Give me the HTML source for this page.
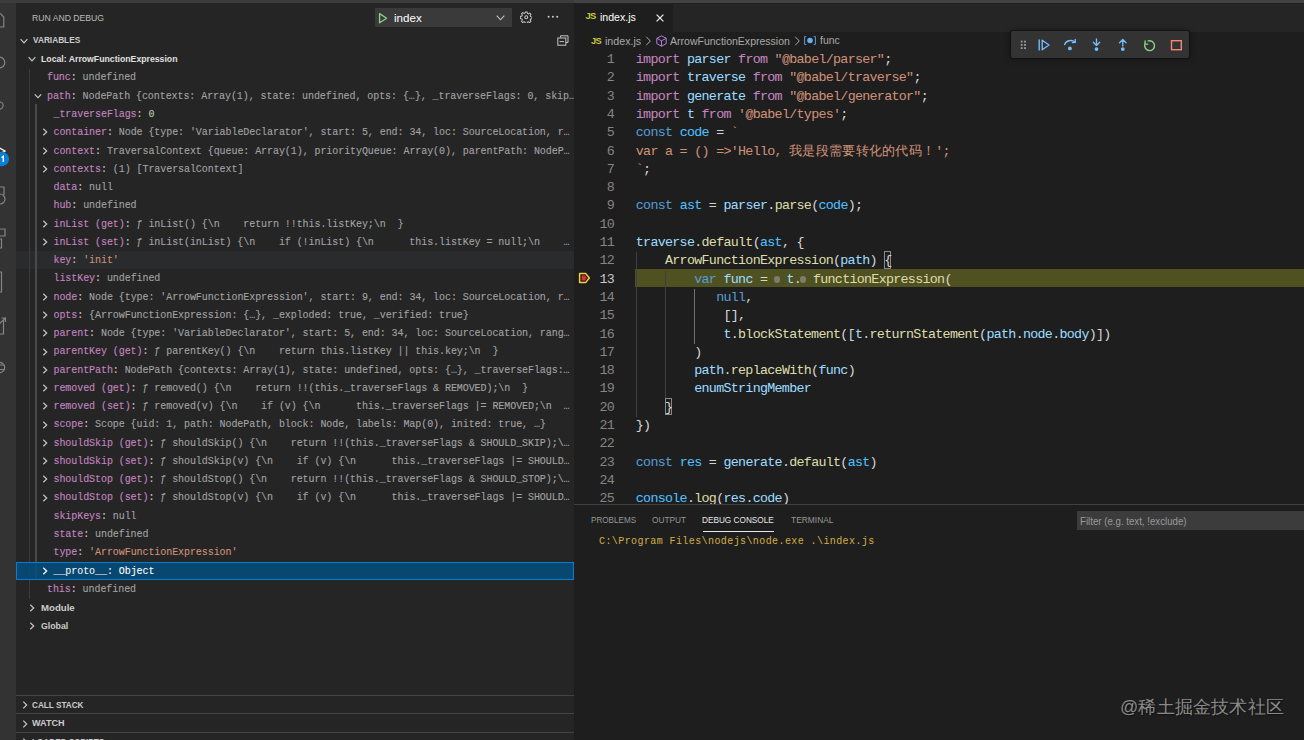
<!DOCTYPE html>
<html><head><meta charset="utf-8">
<style>
*{margin:0;padding:0;box-sizing:border-box}
html,body{width:1304px;height:740px;overflow:hidden;background:#1e1e1e}
body{position:relative;font-family:"Liberation Sans",sans-serif;color:#cccccc}
.abs{position:absolute}
#topstrip{position:absolute;left:0;top:0;width:1304px;height:3px;background:#424242}
#act{position:absolute;left:0;top:3px;width:16px;height:737px;background:#333333;overflow:hidden}
#side{position:absolute;left:16px;top:3px;width:558px;height:737px;background:#252526;overflow:hidden}
#side .title{position:absolute;left:16.8px;top:9.2px;font-size:8.5px;color:#bbbbbb;white-space:pre;line-height:12px}
.dd{position:absolute;left:359px;top:4.6px;width:137px;height:19.4px;background:#3a3a3a}
.ph{position:absolute;font-weight:bold;font-size:8.4px;color:#cccccc;white-space:pre;line-height:12px}
.vrow{position:absolute;left:0;width:558px;height:18.26px}
.vrow.hover{background:#2a2b2c}
.vrow.sel{z-index:3;background:rgba(4,77,126,0.85);outline:1px solid #007fd4;outline-offset:-1px}
.vt{position:absolute;top:0.9px;margin-left:-0.7px;-webkit-text-stroke:0.1px currentColor;font-family:"Liberation Mono",monospace;font-size:10px;letter-spacing:-0.07px;line-height:18.26px;white-space:pre}
.chev{position:absolute;top:5.1px;width:8px;height:8px;line-height:0}
.chev svg{display:block}
.sg{position:absolute;width:1px;z-index:2}
.pane{position:absolute;left:0;width:558px;height:18.3px;border-top:1px solid #444444;background:#252526}
/* editor */
#tabs{position:absolute;left:574px;top:3px;width:730px;height:29px;background:#252526}
#tab{position:absolute;left:0;top:0;width:99px;height:29px;background:#1e1e1e}
.ln{position:absolute;left:574px;width:40px;text-align:right;font-family:"Liberation Mono",monospace;font-size:13.333px;letter-spacing:-0.7px;line-height:18.26px;color:#858585;white-space:pre}
.ln.act{color:#c6c6c6}
.cl{position:absolute;left:635.8px;-webkit-text-stroke-width:0.05px;font-family:"Liberation Mono",monospace;font-size:13.333px;letter-spacing:-0.695px;line-height:18.26px;white-space:pre}
.brk{display:inline-block;height:17.6px;vertical-align:top;position:relative;top:-1.1px;line-height:19.7px;box-shadow:inset 0 0 0 1px #8a8a8a}
.bpd{display:inline-block;width:11.85px;height:18.26px;position:relative;vertical-align:top}
.bpd::after{content:"";position:absolute;left:-1.1px;top:5.6px;width:6.4px;height:6.4px;border-radius:50%;background:#7d7d6e}
.ig{position:absolute;width:1px}
.cjk{display:inline-block;width:146.1px;letter-spacing:0.1px;font-size:13px;vertical-align:top;overflow:hidden}
#hl{position:absolute;left:635.4px;top:269.2px;width:669px;height:18.1px;background:#505120}
#panel{position:absolute;left:574px;top:504px;width:730px;height:236px;background:#1e1e1e;border-top:1px solid #414141}
.ptab{position:absolute;top:9px;font-size:8.5px;letter-spacing:-0.35px;color:#969696;white-space:pre;line-height:12px}
.lbl{position:absolute;font-family:"Liberation Sans",sans-serif;line-height:20px;white-space:pre;transform-origin:0 0}
#toolbar{position:absolute;left:1011px;top:31.4px;width:178px;height:26.2px;background:#333333;border-radius:2px;box-shadow:0 0 0 1px rgba(0,0,0,0.25),0 0 6px rgba(0,0,0,0.5)}
</style></head><body>
<div id="topstrip"></div><div class="abs" style="left:0;top:0;width:574px;height:3px;background:#3c3c3c"></div>

<!-- activity bar -->
<div id="act">
  <svg width="16" height="737" viewBox="0 3 16 737" style="position:absolute;left:0;top:0">
    <g fill="none" stroke="#858585" stroke-width="1.2">
      <!-- files -->
      <path d="M-8 13.5 H0.5 L3.8 17 V27 H-8"/>
      <!-- search -->
      <circle cx="-0.5" cy="62.5" r="5.3"/>
      <!-- scm -->
      <circle cx="-0.5" cy="105.5" r="3.6"/>
      <!-- debug -->
      <path d="M-4 146 L5 151 L-4 156" stroke="#ffffff" stroke-width="1.3"/>
      <!-- extensions-like -->
      <path d="M-4 187 H4 V195"/>
      <circle cx="0" cy="199" r="5"/>
      <path d="M-4 229 H5 V236 H-4"/>
      <path d="M-4 239 H1.5 V248 H-4"/>
      <path d="M-4 272 H1.5 V292 H-4"/>
      <path d="M-4 334 H3.5 V320"/>
      <path d="M-2 325 L5.5 318 M1.5 318 H5.5 V322"/>
      <circle cx="-0.5" cy="367.5" r="5.2"/>
      <path d="M-5 365 H4 M-5 369.5 H4"/>
    </g>
    <circle cx="1.9" cy="159" r="7.2" fill="#0a7fd6"/>
    <path d="M1.6 157.6 L3.3 156.3 V162" fill="none" stroke="#ffffff" stroke-width="1.4"/>
  </svg>
</div>

<!-- sidebar -->
<div id="side">
  <div class="dd"></div>
  <svg class="abs" style="left:361px;top:9px" width="12" height="13" viewBox="0 0 12 13"><path d="M2.6 1.6 L9.6 6.2 L2.6 10.8 Z" fill="none" stroke="#89d185" stroke-width="1.35" stroke-linejoin="round"/></svg>
  <svg class="abs" style="left:480px;top:12px" width="9" height="6" viewBox="0 0 9 6"><path d="M0.7 0.7 L4.5 4.8 L8.3 0.7" fill="none" stroke="#c5c5c5" stroke-width="1.1"/></svg>
  <!-- gear -->
  <svg class="abs" style="left:503.85px;top:7.65px" width="12.5" height="12.5" viewBox="0 0 16 16"><path fill="none" stroke="#c5c5c5" stroke-width="1.3" d="M6.9 1.2h2.2l.4 1.9 1.3.6 1.7-1 1.5 1.5-1 1.7.6 1.3 1.9.4v2.2l-1.9.4-.6 1.3 1 1.7-1.5 1.5-1.7-1-1.3.6-.4 1.9H6.9l-.4-1.9-1.3-.6-1.7 1-1.5-1.5 1-1.7-.6-1.3-1.9-.4V6.9l1.9-.4.6-1.3-1-1.7 1.5-1.5 1.7 1 1.3-.6z"/><circle cx="8" cy="8" r="1.9" fill="none" stroke="#c5c5c5" stroke-width="1.3"/></svg>
  <!-- more -->
  <svg class="abs" style="left:531px;top:12px" width="12" height="4" viewBox="0 0 12 4"><circle cx="1.6" cy="1.8" r="1.05" fill="#c5c5c5"/><circle cx="5.9" cy="1.8" r="1.05" fill="#c5c5c5"/><circle cx="10.2" cy="1.8" r="1.05" fill="#c5c5c5"/></svg>
  <!-- collapse all -->
  <svg class="abs" style="left:540.5px;top:32px" width="12" height="11" viewBox="0 0 12 11"><path d="M3.5 2.5 V0.8 H11 V7.5 H9" fill="none" stroke="#c5c5c5" stroke-width="1"/><rect x="0.8" y="3" width="8" height="7.2" fill="none" stroke="#c5c5c5" stroke-width="1"/><path d="M2.6 6.6 H7" stroke="#c5c5c5" stroke-width="1"/></svg>

  <!-- VARIABLES header -->
  <span class="chev" style="left:4.2px;top:34.2px"><svg width="8" height="8" viewBox="0 0 8 8"><path d="M0.6 2.2 L4 5.8 L7.4 2.2" fill="none" stroke="#c5c5c5" stroke-width="1.2"/></svg></span>
  <span class="chev" style="left:12.2px;top:52.4px"><svg width="8" height="8" viewBox="0 0 8 8"><path d="M0.6 2.2 L4 5.8 L7.4 2.2" fill="none" stroke="#c5c5c5" stroke-width="1.2"/></svg></span>

  <!-- indent guides -->
  <div class="sg" style="left:13px;top:65.6px;height:530px;background:#3b3b3b"></div>
  <div class="sg" style="left:19.2px;top:101.3px;width:1.5px;height:476px;background:#4a4a4a"></div>

  <div id="tree" style="position:absolute;left:0;top:-3px;width:558px;height:740px">
<div class="vrow" style="top:68.60px"><span class="vt" style="left:31.7px"><span style="color:#c586c0;-webkit-text-stroke-color:#c586c0">func</span><span style="color:#cccccc;-webkit-text-stroke-color:#cccccc">: </span><span style="color:#a3a3a3;-webkit-text-stroke-color:#a3a3a3">undefined</span></span></div>
<div class="vrow" style="top:86.86px"><span class="chev" style="left:18.0px"><svg width="8" height="8" viewBox="0 0 8 8"><path d="M0.8 2.3 L4 5.7 L7.2 2.3" fill="none" stroke="#c5c5c5" stroke-width="1.2"/></svg></span><span class="vt" style="left:31.7px"><span style="color:#c586c0;-webkit-text-stroke-color:#c586c0">path</span><span style="color:#cccccc;-webkit-text-stroke-color:#cccccc">: </span><span style="color:#a3a3a3;-webkit-text-stroke-color:#a3a3a3">NodePath {contexts: Array(1), state: undefined, opts: {…}, _traverseFlags: 0, skip…</span></span></div>
<div class="vrow" style="top:105.12px"><span class="vt" style="left:38.2px"><span style="color:#c586c0;-webkit-text-stroke-color:#c586c0">_traverseFlags</span><span style="color:#cccccc;-webkit-text-stroke-color:#cccccc">: </span><span style="color:#b5cea8;-webkit-text-stroke-color:#b5cea8">0</span></span></div>
<div class="vrow" style="top:123.38px"><span class="chev" style="left:24.5px"><svg width="8" height="8" viewBox="0 0 8 8"><path d="M2.3 0.8 L5.7 4 L2.3 7.2" fill="none" stroke="#c5c5c5" stroke-width="1.2"/></svg></span><span class="vt" style="left:38.2px"><span style="color:#c586c0;-webkit-text-stroke-color:#c586c0">container</span><span style="color:#cccccc;-webkit-text-stroke-color:#cccccc">: </span><span style="color:#a3a3a3;-webkit-text-stroke-color:#a3a3a3">Node {type: 'VariableDeclarator', start: 5, end: 34, loc: SourceLocation, r…</span></span></div>
<div class="vrow" style="top:141.64px"><span class="chev" style="left:24.5px"><svg width="8" height="8" viewBox="0 0 8 8"><path d="M2.3 0.8 L5.7 4 L2.3 7.2" fill="none" stroke="#c5c5c5" stroke-width="1.2"/></svg></span><span class="vt" style="left:38.2px"><span style="color:#c586c0;-webkit-text-stroke-color:#c586c0">context</span><span style="color:#cccccc;-webkit-text-stroke-color:#cccccc">: </span><span style="color:#a3a3a3;-webkit-text-stroke-color:#a3a3a3">TraversalContext {queue: Array(1), priorityQueue: Array(0), parentPath: NodeP…</span></span></div>
<div class="vrow" style="top:159.90px"><span class="chev" style="left:24.5px"><svg width="8" height="8" viewBox="0 0 8 8"><path d="M2.3 0.8 L5.7 4 L2.3 7.2" fill="none" stroke="#c5c5c5" stroke-width="1.2"/></svg></span><span class="vt" style="left:38.2px"><span style="color:#c586c0;-webkit-text-stroke-color:#c586c0">contexts</span><span style="color:#cccccc;-webkit-text-stroke-color:#cccccc">: </span><span style="color:#a3a3a3;-webkit-text-stroke-color:#a3a3a3">(1) [TraversalContext]</span></span></div>
<div class="vrow" style="top:178.16px"><span class="vt" style="left:38.2px"><span style="color:#c586c0;-webkit-text-stroke-color:#c586c0">data</span><span style="color:#cccccc;-webkit-text-stroke-color:#cccccc">: </span><span style="color:#a3a3a3;-webkit-text-stroke-color:#a3a3a3">null</span></span></div>
<div class="vrow" style="top:196.42px"><span class="vt" style="left:38.2px"><span style="color:#c586c0;-webkit-text-stroke-color:#c586c0">hub</span><span style="color:#cccccc;-webkit-text-stroke-color:#cccccc">: </span><span style="color:#a3a3a3;-webkit-text-stroke-color:#a3a3a3">undefined</span></span></div>
<div class="vrow" style="top:214.68px"><span class="chev" style="left:24.5px"><svg width="8" height="8" viewBox="0 0 8 8"><path d="M2.3 0.8 L5.7 4 L2.3 7.2" fill="none" stroke="#c5c5c5" stroke-width="1.2"/></svg></span><span class="vt" style="left:38.2px"><span style="color:#c586c0;-webkit-text-stroke-color:#c586c0">inList (get)</span><span style="color:#cccccc;-webkit-text-stroke-color:#cccccc">: </span><span style="color:#a3a3a3;-webkit-text-stroke-color:#a3a3a3">ƒ inList() {\n    return !!this.listKey;\n  }</span></span></div>
<div class="vrow" style="top:232.94px"><span class="chev" style="left:24.5px"><svg width="8" height="8" viewBox="0 0 8 8"><path d="M2.3 0.8 L5.7 4 L2.3 7.2" fill="none" stroke="#c5c5c5" stroke-width="1.2"/></svg></span><span class="vt" style="left:38.2px"><span style="color:#c586c0;-webkit-text-stroke-color:#c586c0">inList (set)</span><span style="color:#cccccc;-webkit-text-stroke-color:#cccccc">: </span><span style="color:#a3a3a3;-webkit-text-stroke-color:#a3a3a3">ƒ inList(inList) {\n    if (!inList) {\n      this.listKey = null;\n    …</span></span></div>
<div class="vrow hover" style="top:251.20px"><span class="vt" style="left:38.2px"><span style="color:#c586c0;-webkit-text-stroke-color:#c586c0">key</span><span style="color:#cccccc;-webkit-text-stroke-color:#cccccc">: </span><span style="color:#ce9178;-webkit-text-stroke-color:#ce9178">'init'</span></span></div>
<div class="vrow" style="top:269.46px"><span class="vt" style="left:38.2px"><span style="color:#c586c0;-webkit-text-stroke-color:#c586c0">listKey</span><span style="color:#cccccc;-webkit-text-stroke-color:#cccccc">: </span><span style="color:#a3a3a3;-webkit-text-stroke-color:#a3a3a3">undefined</span></span></div>
<div class="vrow" style="top:287.72px"><span class="chev" style="left:24.5px"><svg width="8" height="8" viewBox="0 0 8 8"><path d="M2.3 0.8 L5.7 4 L2.3 7.2" fill="none" stroke="#c5c5c5" stroke-width="1.2"/></svg></span><span class="vt" style="left:38.2px"><span style="color:#c586c0;-webkit-text-stroke-color:#c586c0">node</span><span style="color:#cccccc;-webkit-text-stroke-color:#cccccc">: </span><span style="color:#a3a3a3;-webkit-text-stroke-color:#a3a3a3">Node {type: 'ArrowFunctionExpression', start: 9, end: 34, loc: SourceLocation, r…</span></span></div>
<div class="vrow" style="top:305.98px"><span class="chev" style="left:24.5px"><svg width="8" height="8" viewBox="0 0 8 8"><path d="M2.3 0.8 L5.7 4 L2.3 7.2" fill="none" stroke="#c5c5c5" stroke-width="1.2"/></svg></span><span class="vt" style="left:38.2px"><span style="color:#c586c0;-webkit-text-stroke-color:#c586c0">opts</span><span style="color:#cccccc;-webkit-text-stroke-color:#cccccc">: </span><span style="color:#a3a3a3;-webkit-text-stroke-color:#a3a3a3">{ArrowFunctionExpression: {…}, _exploded: true, _verified: true}</span></span></div>
<div class="vrow" style="top:324.24px"><span class="chev" style="left:24.5px"><svg width="8" height="8" viewBox="0 0 8 8"><path d="M2.3 0.8 L5.7 4 L2.3 7.2" fill="none" stroke="#c5c5c5" stroke-width="1.2"/></svg></span><span class="vt" style="left:38.2px"><span style="color:#c586c0;-webkit-text-stroke-color:#c586c0">parent</span><span style="color:#cccccc;-webkit-text-stroke-color:#cccccc">: </span><span style="color:#a3a3a3;-webkit-text-stroke-color:#a3a3a3">Node {type: 'VariableDeclarator', start: 5, end: 34, loc: SourceLocation, rang…</span></span></div>
<div class="vrow" style="top:342.50px"><span class="chev" style="left:24.5px"><svg width="8" height="8" viewBox="0 0 8 8"><path d="M2.3 0.8 L5.7 4 L2.3 7.2" fill="none" stroke="#c5c5c5" stroke-width="1.2"/></svg></span><span class="vt" style="left:38.2px"><span style="color:#c586c0;-webkit-text-stroke-color:#c586c0">parentKey (get)</span><span style="color:#cccccc;-webkit-text-stroke-color:#cccccc">: </span><span style="color:#a3a3a3;-webkit-text-stroke-color:#a3a3a3">ƒ parentKey() {\n    return this.listKey || this.key;\n  }</span></span></div>
<div class="vrow" style="top:360.76px"><span class="chev" style="left:24.5px"><svg width="8" height="8" viewBox="0 0 8 8"><path d="M2.3 0.8 L5.7 4 L2.3 7.2" fill="none" stroke="#c5c5c5" stroke-width="1.2"/></svg></span><span class="vt" style="left:38.2px"><span style="color:#c586c0;-webkit-text-stroke-color:#c586c0">parentPath</span><span style="color:#cccccc;-webkit-text-stroke-color:#cccccc">: </span><span style="color:#a3a3a3;-webkit-text-stroke-color:#a3a3a3">NodePath {contexts: Array(1), state: undefined, opts: {…}, _traverseFlags:…</span></span></div>
<div class="vrow" style="top:379.02px"><span class="chev" style="left:24.5px"><svg width="8" height="8" viewBox="0 0 8 8"><path d="M2.3 0.8 L5.7 4 L2.3 7.2" fill="none" stroke="#c5c5c5" stroke-width="1.2"/></svg></span><span class="vt" style="left:38.2px"><span style="color:#c586c0;-webkit-text-stroke-color:#c586c0">removed (get)</span><span style="color:#cccccc;-webkit-text-stroke-color:#cccccc">: </span><span style="color:#a3a3a3;-webkit-text-stroke-color:#a3a3a3">ƒ removed() {\n    return !!(this._traverseFlags &amp; REMOVED);\n  }</span></span></div>
<div class="vrow" style="top:397.28px"><span class="chev" style="left:24.5px"><svg width="8" height="8" viewBox="0 0 8 8"><path d="M2.3 0.8 L5.7 4 L2.3 7.2" fill="none" stroke="#c5c5c5" stroke-width="1.2"/></svg></span><span class="vt" style="left:38.2px"><span style="color:#c586c0;-webkit-text-stroke-color:#c586c0">removed (set)</span><span style="color:#cccccc;-webkit-text-stroke-color:#cccccc">: </span><span style="color:#a3a3a3;-webkit-text-stroke-color:#a3a3a3">ƒ removed(v) {\n    if (v) {\n      this._traverseFlags |= REMOVED;\n  …</span></span></div>
<div class="vrow" style="top:415.54px"><span class="chev" style="left:24.5px"><svg width="8" height="8" viewBox="0 0 8 8"><path d="M2.3 0.8 L5.7 4 L2.3 7.2" fill="none" stroke="#c5c5c5" stroke-width="1.2"/></svg></span><span class="vt" style="left:38.2px"><span style="color:#c586c0;-webkit-text-stroke-color:#c586c0">scope</span><span style="color:#cccccc;-webkit-text-stroke-color:#cccccc">: </span><span style="color:#a3a3a3;-webkit-text-stroke-color:#a3a3a3">Scope {uid: 1, path: NodePath, block: Node, labels: Map(0), inited: true, …}</span></span></div>
<div class="vrow" style="top:433.80px"><span class="chev" style="left:24.5px"><svg width="8" height="8" viewBox="0 0 8 8"><path d="M2.3 0.8 L5.7 4 L2.3 7.2" fill="none" stroke="#c5c5c5" stroke-width="1.2"/></svg></span><span class="vt" style="left:38.2px"><span style="color:#c586c0;-webkit-text-stroke-color:#c586c0">shouldSkip (get)</span><span style="color:#cccccc;-webkit-text-stroke-color:#cccccc">: </span><span style="color:#a3a3a3;-webkit-text-stroke-color:#a3a3a3">ƒ shouldSkip() {\n    return !!(this._traverseFlags &amp; SHOULD_SKIP);\…</span></span></div>
<div class="vrow" style="top:452.06px"><span class="chev" style="left:24.5px"><svg width="8" height="8" viewBox="0 0 8 8"><path d="M2.3 0.8 L5.7 4 L2.3 7.2" fill="none" stroke="#c5c5c5" stroke-width="1.2"/></svg></span><span class="vt" style="left:38.2px"><span style="color:#c586c0;-webkit-text-stroke-color:#c586c0">shouldSkip (set)</span><span style="color:#cccccc;-webkit-text-stroke-color:#cccccc">: </span><span style="color:#a3a3a3;-webkit-text-stroke-color:#a3a3a3">ƒ shouldSkip(v) {\n    if (v) {\n      this._traverseFlags |= SHOULD…</span></span></div>
<div class="vrow" style="top:470.32px"><span class="chev" style="left:24.5px"><svg width="8" height="8" viewBox="0 0 8 8"><path d="M2.3 0.8 L5.7 4 L2.3 7.2" fill="none" stroke="#c5c5c5" stroke-width="1.2"/></svg></span><span class="vt" style="left:38.2px"><span style="color:#c586c0;-webkit-text-stroke-color:#c586c0">shouldStop (get)</span><span style="color:#cccccc;-webkit-text-stroke-color:#cccccc">: </span><span style="color:#a3a3a3;-webkit-text-stroke-color:#a3a3a3">ƒ shouldStop() {\n    return !!(this._traverseFlags &amp; SHOULD_STOP);\…</span></span></div>
<div class="vrow" style="top:488.58px"><span class="chev" style="left:24.5px"><svg width="8" height="8" viewBox="0 0 8 8"><path d="M2.3 0.8 L5.7 4 L2.3 7.2" fill="none" stroke="#c5c5c5" stroke-width="1.2"/></svg></span><span class="vt" style="left:38.2px"><span style="color:#c586c0;-webkit-text-stroke-color:#c586c0">shouldStop (set)</span><span style="color:#cccccc;-webkit-text-stroke-color:#cccccc">: </span><span style="color:#a3a3a3;-webkit-text-stroke-color:#a3a3a3">ƒ shouldStop(v) {\n    if (v) {\n      this._traverseFlags |= SHOULD…</span></span></div>
<div class="vrow" style="top:506.84px"><span class="vt" style="left:38.2px"><span style="color:#c586c0;-webkit-text-stroke-color:#c586c0">skipKeys</span><span style="color:#cccccc;-webkit-text-stroke-color:#cccccc">: </span><span style="color:#a3a3a3;-webkit-text-stroke-color:#a3a3a3">null</span></span></div>
<div class="vrow" style="top:525.10px"><span class="vt" style="left:38.2px"><span style="color:#c586c0;-webkit-text-stroke-color:#c586c0">state</span><span style="color:#cccccc;-webkit-text-stroke-color:#cccccc">: </span><span style="color:#a3a3a3;-webkit-text-stroke-color:#a3a3a3">undefined</span></span></div>
<div class="vrow" style="top:543.36px"><span class="vt" style="left:38.2px"><span style="color:#c586c0;-webkit-text-stroke-color:#c586c0">type</span><span style="color:#cccccc;-webkit-text-stroke-color:#cccccc">: </span><span style="color:#ce9178;-webkit-text-stroke-color:#ce9178">'ArrowFunctionExpression'</span></span></div>
<div class="vrow sel" style="top:561.62px"><span class="chev" style="left:24.5px"><svg width="8" height="8" viewBox="0 0 8 8"><path d="M2.3 0.8 L5.7 4 L2.3 7.2" fill="none" stroke="#ffffff" stroke-width="1.2"/></svg></span><span class="vt" style="left:38.2px"><span style="color:#f0f0f0;-webkit-text-stroke-color:#f0f0f0">__proto__</span><span style="color:#f0f0f0;-webkit-text-stroke-color:#f0f0f0">: </span><span style="color:#ffffff;-webkit-text-stroke-color:#ffffff">Object</span></span></div>
<div class="vrow" style="top:579.88px"><span class="vt" style="left:31.7px"><span style="color:#c586c0;-webkit-text-stroke-color:#c586c0">this</span><span style="color:#cccccc;-webkit-text-stroke-color:#cccccc">: </span><span style="color:#a3a3a3;-webkit-text-stroke-color:#a3a3a3">undefined</span></span></div>
  </div>

  <!-- Module / Global -->
  <span class="chev" style="left:12.2px;top:600.5px"><svg width="8" height="8" viewBox="0 0 8 8"><path d="M2.3 0.8 L5.7 4 L2.3 7.2" fill="none" stroke="#c5c5c5" stroke-width="1.2"/></svg></span>
  <span class="chev" style="left:12.2px;top:618.7px"><svg width="8" height="8" viewBox="0 0 8 8"><path d="M2.3 0.8 L5.7 4 L2.3 7.2" fill="none" stroke="#c5c5c5" stroke-width="1.2"/></svg></span>

  <!-- bottom panes -->
  <div class="pane" style="top:692px"></div>
  <div class="pane" style="top:710.3px"></div>
  <div class="pane" style="top:728.6px"></div>
  <span class="chev" style="left:4.6px;top:698.2px"><svg width="8" height="8" viewBox="0 0 8 8"><path d="M2.3 0.6 L5.7 4 L2.3 7.4" fill="none" stroke="#c5c5c5" stroke-width="1.2"/></svg></span>
  <span class="chev" style="left:4.6px;top:716.5px"><svg width="8" height="8" viewBox="0 0 8 8"><path d="M2.3 0.6 L5.7 4 L2.3 7.4" fill="none" stroke="#c5c5c5" stroke-width="1.2"/></svg></span>
  <span class="chev" style="left:4.6px;top:734.8px"><svg width="8" height="8" viewBox="0 0 8 8"><path d="M2.3 0.6 L5.7 4 L2.3 7.4" fill="none" stroke="#c5c5c5" stroke-width="1.2"/></svg></span>
</div>

<!-- editor tabs -->
<div id="tabs">
  <div id="tab"></div><div class="abs" style="left:0;top:0;width:730px;height:1px;background:#1f1f1f"></div>
</div>
<div class="abs" style="left:585.5px;top:10.1px;font-size:9.4px;font-weight:bold;color:#cbcb41;line-height:12px;letter-spacing:-0.6px">JS</div>
<svg class="abs" style="left:655px;top:12.5px" width="10" height="10" viewBox="0 0 10 10"><path d="M1.6 1.6 L8.4 8.4 M8.4 1.6 L1.6 8.4" stroke="#f0f0f0" stroke-width="1.25"/></svg>

<!-- breadcrumbs -->
<div class="abs" style="left:591px;top:34.9px;font-size:9.2px;font-weight:bold;color:#cbcb41;line-height:12px;letter-spacing:-0.6px">JS</div>
<svg class="abs" style="left:645px;top:36px" width="7" height="10" viewBox="0 0 7 10"><path d="M1.3 0.8 L5.3 5 L1.3 9.2" fill="none" stroke="#a9a9a9" stroke-width="1"/></svg>
<svg class="abs" style="left:655.5px;top:35px" width="11" height="12" viewBox="0 0 11 12"><path d="M5.5 0.8 L10.2 3.3 V8.7 L5.5 11.2 L0.8 8.7 V3.3 Z M0.8 3.3 L5.5 5.8 L10.2 3.3 M5.5 5.8 V11.2" fill="none" stroke="#b180d7" stroke-width="1"/></svg>
<svg class="abs" style="left:794px;top:36px" width="7" height="10" viewBox="0 0 7 10"><path d="M1.3 0.8 L5.3 5 L1.3 9.2" fill="none" stroke="#a9a9a9" stroke-width="1"/></svg>
<svg class="abs" style="left:804px;top:36.3px" width="12" height="9" viewBox="0 0 12 9"><path d="M2.3 0.6 H0.6 V8.4 H2.3 M9.7 0.6 H11.4 V8.4 H9.7" fill="none" stroke="#5f9fcf" stroke-width="1"/><circle cx="6" cy="4.5" r="2.8" fill="#6aaef0"/></svg>

<!-- current line highlight -->
<div id="hl"></div>
<!-- breakpoint stopped icon -->
<svg class="abs" style="left:577px;top:271px" width="15" height="14" viewBox="0 0 15 14"><path d="M2.6 2.4 H8.6 L12.3 7 L8.6 11.6 H2.6 Z" fill="none" stroke="#f2cc4a" stroke-width="1.5" stroke-linejoin="round"/><path d="M4.6 4.6 H8 L9.8 7 L8 9.6 H4.6 Z" fill="#e2301a"/></svg>

<div class="ig" style="left:635.8px;top:252.30px;height:164.70px;background:#404040"></div>
<div class="ig" style="left:665.0px;top:270.60px;height:128.10px;background:#404040"></div>
<div class="ig" style="left:694.2px;top:288.90px;height:54.90px;background:#707070"></div>
<div class="ln" style="top:51.00px">1</div>
<div class="cl" style="top:51.00px"><span style="color:#c586c0">import</span><span style="color:#d4d4d4"> </span><span style="color:#9cdcfe">parser</span><span style="color:#d4d4d4"> </span><span style="color:#c586c0">from</span><span style="color:#d4d4d4"> </span><span style="color:#ce9178">"@babel/parser"</span><span style="color:#d4d4d4">;</span></div>
<div class="ln" style="top:69.30px">2</div>
<div class="cl" style="top:69.30px"><span style="color:#c586c0">import</span><span style="color:#d4d4d4"> </span><span style="color:#9cdcfe">traverse</span><span style="color:#d4d4d4"> </span><span style="color:#c586c0">from</span><span style="color:#d4d4d4"> </span><span style="color:#ce9178">"@babel/traverse"</span><span style="color:#d4d4d4">;</span></div>
<div class="ln" style="top:87.60px">3</div>
<div class="cl" style="top:87.60px"><span style="color:#c586c0">import</span><span style="color:#d4d4d4"> </span><span style="color:#9cdcfe">generate</span><span style="color:#d4d4d4"> </span><span style="color:#c586c0">from</span><span style="color:#d4d4d4"> </span><span style="color:#ce9178">"@babel/generator"</span><span style="color:#d4d4d4">;</span></div>
<div class="ln" style="top:105.90px">4</div>
<div class="cl" style="top:105.90px"><span style="color:#c586c0">import</span><span style="color:#d4d4d4"> </span><span style="color:#9cdcfe">t</span><span style="color:#d4d4d4"> </span><span style="color:#c586c0">from</span><span style="color:#d4d4d4"> </span><span style="color:#ce9178">'@babel/types'</span><span style="color:#d4d4d4">;</span></div>
<div class="ln" style="top:124.20px">5</div>
<div class="cl" style="top:124.20px"><span style="color:#569cd6">const</span><span style="color:#d4d4d4"> </span><span style="color:#4fc1ff">code</span><span style="color:#d4d4d4"> = </span><span style="color:#ce9178">`</span></div>
<div class="ln" style="top:142.50px">6</div>
<div class="cl" style="top:142.50px"><span style="color:#ce9178">var a = () =&gt;'Hello, </span><span class="cjk" style="color:#ce9178"><span style="display:inline-block;width:13.28px;text-align:left">我</span><span style="display:inline-block;width:13.28px;text-align:left">是</span><span style="display:inline-block;width:13.28px;text-align:left">段</span><span style="display:inline-block;width:13.28px;text-align:left">需</span><span style="display:inline-block;width:13.28px;text-align:left">要</span><span style="display:inline-block;width:13.28px;text-align:left">转</span><span style="display:inline-block;width:13.28px;text-align:left">化</span><span style="display:inline-block;width:13.28px;text-align:left">的</span><span style="display:inline-block;width:13.28px;text-align:left">代</span><span style="display:inline-block;width:13.28px;text-align:left">码</span><span style="display:inline-block;width:13.28px;text-align:left">！</span></span><span style="color:#ce9178">';</span></div>
<div class="ln" style="top:160.80px">7</div>
<div class="cl" style="top:160.80px"><span style="color:#ce9178">`</span><span style="color:#d4d4d4">;</span></div>
<div class="ln" style="top:179.10px">8</div>
<div class="cl" style="top:179.10px"></div>
<div class="ln" style="top:197.40px">9</div>
<div class="cl" style="top:197.40px"><span style="color:#569cd6">const</span><span style="color:#d4d4d4"> </span><span style="color:#4fc1ff">ast</span><span style="color:#d4d4d4"> = </span><span style="color:#9cdcfe">parser</span><span style="color:#d4d4d4">.</span><span style="color:#dcdcaa">parse</span><span style="color:#d4d4d4">(</span><span style="color:#4fc1ff">code</span><span style="color:#d4d4d4">);</span></div>
<div class="ln" style="top:215.70px">10</div>
<div class="cl" style="top:215.70px"></div>
<div class="ln" style="top:234.00px">11</div>
<div class="cl" style="top:234.00px"><span style="color:#9cdcfe">traverse</span><span style="color:#d4d4d4">.</span><span style="color:#dcdcaa">default</span><span style="color:#d4d4d4">(</span><span style="color:#4fc1ff">ast</span><span style="color:#d4d4d4">, {</span></div>
<div class="ln" style="top:252.30px">12</div>
<div class="cl" style="top:252.30px"><span style="color:#d4d4d4">    </span><span style="color:#dcdcaa">ArrowFunctionExpression</span><span style="color:#d4d4d4">(</span><span style="color:#9cdcfe">path</span><span style="color:#d4d4d4">) </span><span class="brk" style="color:#d4d4d4">{</span></div>
<div class="ln act" style="top:270.60px">13</div>
<div class="cl" style="top:270.60px"><span style="color:#d4d4d4">        </span><span style="color:#569cd6">var</span><span style="color:#d4d4d4"> </span><span style="color:#9cdcfe">func</span><span style="color:#d4d4d4"> = </span><span class="bpd"></span><span style="color:#9cdcfe">t</span><span style="color:#d4d4d4">.</span><span class="bpd"></span><span style="color:#dcdcaa">functionExpression</span><span style="color:#d4d4d4">(</span></div>
<div class="ln" style="top:288.90px">14</div>
<div class="cl" style="top:288.90px"><span style="color:#d4d4d4">           </span><span style="color:#569cd6">null</span><span style="color:#d4d4d4">,</span></div>
<div class="ln" style="top:307.20px">15</div>
<div class="cl" style="top:307.20px"><span style="color:#d4d4d4">            </span><span style="color:#d4d4d4">[],</span></div>
<div class="ln" style="top:325.50px">16</div>
<div class="cl" style="top:325.50px"><span style="color:#d4d4d4">            </span><span style="color:#9cdcfe">t</span><span style="color:#d4d4d4">.</span><span style="color:#dcdcaa">blockStatement</span><span style="color:#d4d4d4">([</span><span style="color:#9cdcfe">t</span><span style="color:#d4d4d4">.</span><span style="color:#dcdcaa">returnStatement</span><span style="color:#d4d4d4">(</span><span style="color:#9cdcfe">path</span><span style="color:#d4d4d4">.</span><span style="color:#9cdcfe">node</span><span style="color:#d4d4d4">.</span><span style="color:#9cdcfe">body</span><span style="color:#d4d4d4">)])</span></div>
<div class="ln" style="top:343.80px">17</div>
<div class="cl" style="top:343.80px"><span style="color:#d4d4d4">        </span><span style="color:#d4d4d4">)</span></div>
<div class="ln" style="top:362.10px">18</div>
<div class="cl" style="top:362.10px"><span style="color:#d4d4d4">        </span><span style="color:#9cdcfe">path</span><span style="color:#d4d4d4">.</span><span style="color:#dcdcaa">replaceWith</span><span style="color:#d4d4d4">(</span><span style="color:#9cdcfe">func</span><span style="color:#d4d4d4">)</span></div>
<div class="ln" style="top:380.40px">19</div>
<div class="cl" style="top:380.40px"><span style="color:#d4d4d4">        </span><span style="color:#9cdcfe">enumStringMember</span></div>
<div class="ln" style="top:398.70px">20</div>
<div class="cl" style="top:398.70px"><span style="color:#d4d4d4">    </span><span class="brk" style="color:#d4d4d4">}</span></div>
<div class="ln" style="top:417.00px">21</div>
<div class="cl" style="top:417.00px"><span style="color:#d4d4d4">})</span></div>
<div class="ln" style="top:435.30px">22</div>
<div class="cl" style="top:435.30px"></div>
<div class="ln" style="top:453.60px">23</div>
<div class="cl" style="top:453.60px"><span style="color:#569cd6">const</span><span style="color:#d4d4d4"> </span><span style="color:#4fc1ff">res</span><span style="color:#d4d4d4"> = </span><span style="color:#9cdcfe">generate</span><span style="color:#d4d4d4">.</span><span style="color:#dcdcaa">default</span><span style="color:#d4d4d4">(</span><span style="color:#4fc1ff">ast</span><span style="color:#d4d4d4">)</span></div>
<div class="ln" style="top:471.90px">24</div>
<div class="cl" style="top:471.90px"></div>
<div class="ln" style="top:490.20px">25</div>
<div class="cl" style="top:490.20px"><span style="color:#4fc1ff">console</span><span style="color:#d4d4d4">.</span><span style="color:#dcdcaa">log</span><span style="color:#d4d4d4">(</span><span style="color:#9cdcfe">res</span><span style="color:#d4d4d4">.</span><span style="color:#9cdcfe">code</span><span style="color:#d4d4d4">)</span></div>

<!-- debug toolbar -->
<div id="toolbar"></div>
<svg class="abs" style="left:1011px;top:31px" width="178" height="27" viewBox="0 0 178 27">
  <g fill="#a0a0a0"><rect x="9.799999999999999" y="9.7" width="1.8" height="1.8"/><rect x="13.1" y="9.7" width="1.8" height="1.8"/><rect x="9.799999999999999" y="12.95" width="1.8" height="1.8"/><rect x="13.1" y="12.95" width="1.8" height="1.8"/><rect x="9.799999999999999" y="16.200000000000003" width="1.8" height="1.8"/><rect x="13.1" y="16.200000000000003" width="1.8" height="1.8"/></g>
  <g fill="none" stroke="#75beff" stroke-width="1.35" stroke-linecap="round" stroke-linejoin="round">
    <path d="M28.2 9 V18.9"/><path d="M31.2 9.2 L38 14 L31.2 18.8 Z"/>
    <path d="M53.6 13.6 C55 9.6 60.5 8.2 64 11"/><path d="M64.2 8.4 L64.3 11.3 L61.4 11.6"/>
    <path d="M85.5 8 V14.2 M82.3 11.3 L85.5 14.4 L88.7 11.3"/>
    <path d="M111.8 15 V8.6 M108.6 11.7 L111.8 8.5 L115 11.7"/>
  </g>
  <g fill="#75beff"><circle cx="58.9" cy="17.4" r="1.9"/><circle cx="85.5" cy="18.1" r="1.9"/><circle cx="111.8" cy="18.1" r="1.9"/></g>
  <g fill="none" stroke="#89d185" stroke-width="1.4" stroke-linejoin="round"><path d="M134.2 12.5 A4.9 4.9 0 1 0 136.6 10.2"/><path d="M134.1 9.6 V13.1 H137.3"/></g>
  <rect x="160.5" y="9.7" width="9.8" height="9" fill="none" stroke="#f48771" stroke-width="1.4"/>
</svg>

<!-- panel -->
<div id="panel">
  <div class="abs" style="left:129px;top:25.8px;width:71px;height:1px;background:#e7e7e7"></div>
  <div class="abs" style="left:503px;top:5.5px;width:227px;height:19.4px;background:#3c3c3c"></div>
  <div class="abs" style="left:25px;top:27.5px;font-family:'Liberation Mono',monospace;font-size:10px;letter-spacing:0.41px;color:#d4ae48;line-height:18px;white-space:pre">C:\Program Files\nodejs\node.exe .\index.js</div>
</div>

<div class="lbl" style="left:31.84px;top:7.70px;font-size:9px;font-weight:400;color:#bbbbbb;transform:scaleX(0.9608)">RUN AND DEBUG</div>
<div class="lbl" style="left:32.80px;top:30.00px;font-size:9px;font-weight:700;color:#cccccc;transform:scaleX(0.9196)">VARIABLES</div>
<div class="lbl" style="left:41.00px;top:49.40px;font-size:9px;font-weight:700;color:#e0e0e0;transform:scaleX(0.9667)">Local: ArrowFunctionExpression</div>
<div class="lbl" style="left:40.80px;top:597.60px;font-size:9px;font-weight:700;color:#cccccc;transform:scaleX(1.0710)">Module</div>
<div class="lbl" style="left:40.80px;top:615.90px;font-size:9px;font-weight:700;color:#cccccc;transform:scaleX(0.9750)">Global</div>
<div class="lbl" style="left:32.20px;top:694.90px;font-size:9px;font-weight:700;color:#cccccc;transform:scaleX(0.9088)">CALL STACK</div>
<div class="lbl" style="left:32.20px;top:713.30px;font-size:9px;font-weight:700;color:#cccccc;transform:scaleX(1.0063)">WATCH</div>
<div class="lbl" style="left:32.20px;top:731.60px;font-size:9px;font-weight:700;color:#cccccc;transform:scaleX(0.9088)">LOADED SCRIPTS</div>
<div class="lbl" style="left:393.54px;top:7.50px;font-size:11px;font-weight:400;color:#ffffff;transform:scaleX(1.0560)">index</div>
<div class="lbl" style="left:600.44px;top:6.90px;font-size:11px;font-weight:400;color:#ffffff;transform:scaleX(0.9611)">index.js</div>
<div class="lbl" style="left:605.23px;top:30.50px;font-size:11px;font-weight:400;color:#a9a9a9;transform:scaleX(0.9694)">index.js</div>
<div class="lbl" style="left:670.40px;top:30.90px;font-size:11px;font-weight:400;color:#a9a9a9;transform:scaleX(0.9568)">ArrowFunctionExpression</div>
<div class="lbl" style="left:819.50px;top:30.20px;font-size:11px;font-weight:400;color:#a9a9a9;transform:scaleX(0.9524)">func</div>
<div class="lbl" style="left:590.50px;top:509.90px;font-size:9px;font-weight:400;color:#969696;transform:scaleX(0.9020)">PROBLEMS</div>
<div class="lbl" style="left:652.00px;top:509.90px;font-size:9px;font-weight:400;color:#969696;transform:scaleX(0.9189)">OUTPUT</div>
<div class="lbl" style="left:702.09px;top:509.90px;font-size:9px;font-weight:400;color:#e7e7e7;transform:scaleX(0.9143)">DEBUG CONSOLE</div>
<div class="lbl" style="left:791.00px;top:509.90px;font-size:9px;font-weight:400;color:#969696;transform:scaleX(0.9333)">TERMINAL</div>
<div class="lbl" style="left:1080.03px;top:511.80px;font-size:10px;font-weight:400;color:#9a9a9a;transform:scaleX(0.9679)">Filter (e.g. text, !exclude)</div>
<!-- watermark -->
<div class="abs" style="left:1120px;top:696px;font-size:18px;color:#8a8a8a;line-height:22px;white-space:pre;text-shadow:1px 1px 1px rgba(0,0,0,0.45)">@<span style="display:inline-block;width:18.2px;text-align:center">稀</span><span style="display:inline-block;width:18.2px;text-align:center">土</span><span style="display:inline-block;width:18.2px;text-align:center">掘</span><span style="display:inline-block;width:18.2px;text-align:center">金</span><span style="display:inline-block;width:18.2px;text-align:center">技</span><span style="display:inline-block;width:18.2px;text-align:center">术</span><span style="display:inline-block;width:18.2px;text-align:center">社</span><span style="display:inline-block;width:18.2px;text-align:center">区</span></div>
</body></html>
